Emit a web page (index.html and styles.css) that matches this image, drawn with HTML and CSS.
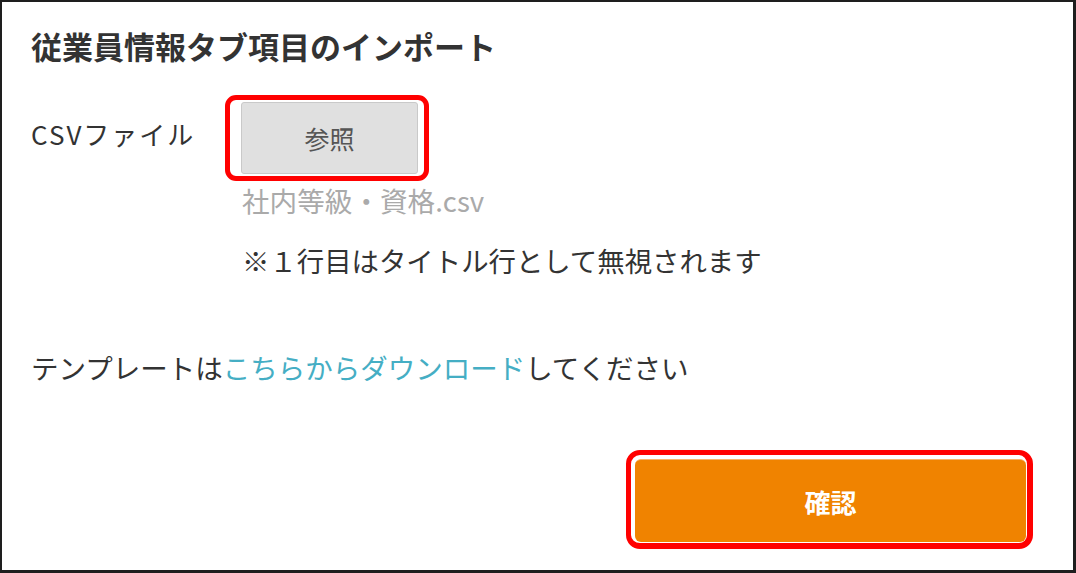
FILE: index.html
```html
<!DOCTYPE html>
<html>
<head>
    <title>従業員情報タブ項目のインポート</title>
    <link rel="stylesheet" href="styles.css">
</head>
<body>
    <div class="panel">
        <h2 class="title">従業員情報タブ項目のインポート</h2>

        <div class="file-row">
            <div class="file-label">CSVファイル</div>
            <div class="file-col">
                <div class="mark mark-ref">
                    <button type="button" class="ref-btn">参照</button>
                </div>
                <div class="file-name">社内等級・資格.csv</div>
                <div class="note">※１行目はタイトル行として無視されます</div>
            </div>
        </div>

        <p class="template">テンプレートは<a href="#" class="dl-link">こちらからダウンロード</a>してください</p>

        <div class="actions">
            <div class="mark mark-ok">
                <button type="button" class="ok-btn">確認</button>
            </div>
        </div>
    </div>
</body>
</html>
```

FILE: styles.css
```css
body {
    margin: 0;
    background-color: #fff;
    font-family: "Noto Sans CJK JP", "Noto Sans", sans-serif;
    color: #333;
}

.panel {
    box-sizing: border-box;
    width: 1076px;
    height: 573px;
    border-style: solid;
    border-color: #1e1e1e;
    border-width: 2px 3px 3px 2px;
    padding: 24px 40px 0 29px;
}

.title {
    margin: 0;
    font-size: 31px;
    line-height: 40px;
    font-weight: bold;
    color: #333;
}

.file-row {
    display: flex;
    margin-top: 29px;
}

.file-label {
    width: 194px;
    padding-top: 19px;
    font-size: 26px;
    line-height: 40px;
    letter-spacing: 2px;
}

.file-col {
    display: flex;
    flex-direction: column;
    align-items: flex-start;
}

/* red annotation frames */
.mark {
    border: 5px solid #f00;
    border-radius: 14px;
}

.mark-ref {
    padding: 2px 6px 2px 11px;
    border-radius: 11px;
}

.mark-ok {
    padding: 4px 1px 1px 4px;
    border-width: 5px 6px 6px 5px;
}

.ref-btn {
    width: 177px;
    height: 72px;
    background-color: #e0e0e0;
    border: 1px solid #c9c9c9;
    border-radius: 3px;
    font-family: inherit;
    font-size: 25px;
    color: #555;
    cursor: pointer;
}

.file-name {
    margin: 3px 0 0 17px;
    font-size: 27.6px;
    line-height: 32px;
    color: #aaa;
}

.note {
    margin: 28px 0 0 17px;
    font-size: 27.4px;
    line-height: 32px;
}

.template {
    margin: 71px 0 0;
    font-size: 27.5px;
    line-height: 40px;
}

.dl-link {
    color: #45aec4;
    text-decoration: none;
}

.actions {
    display: flex;
    justify-content: flex-end;
    margin-top: 63px;
}

.ok-btn {
    width: 391px;
    height: 83px;
    background-color: #f08300;
    border: none;
    border-top: 1px solid #f6b36a;
    border-radius: 6px;
    font-family: inherit;
    font-size: 26px;
    font-weight: bold;
    color: #fff;
    cursor: pointer;
}
```
